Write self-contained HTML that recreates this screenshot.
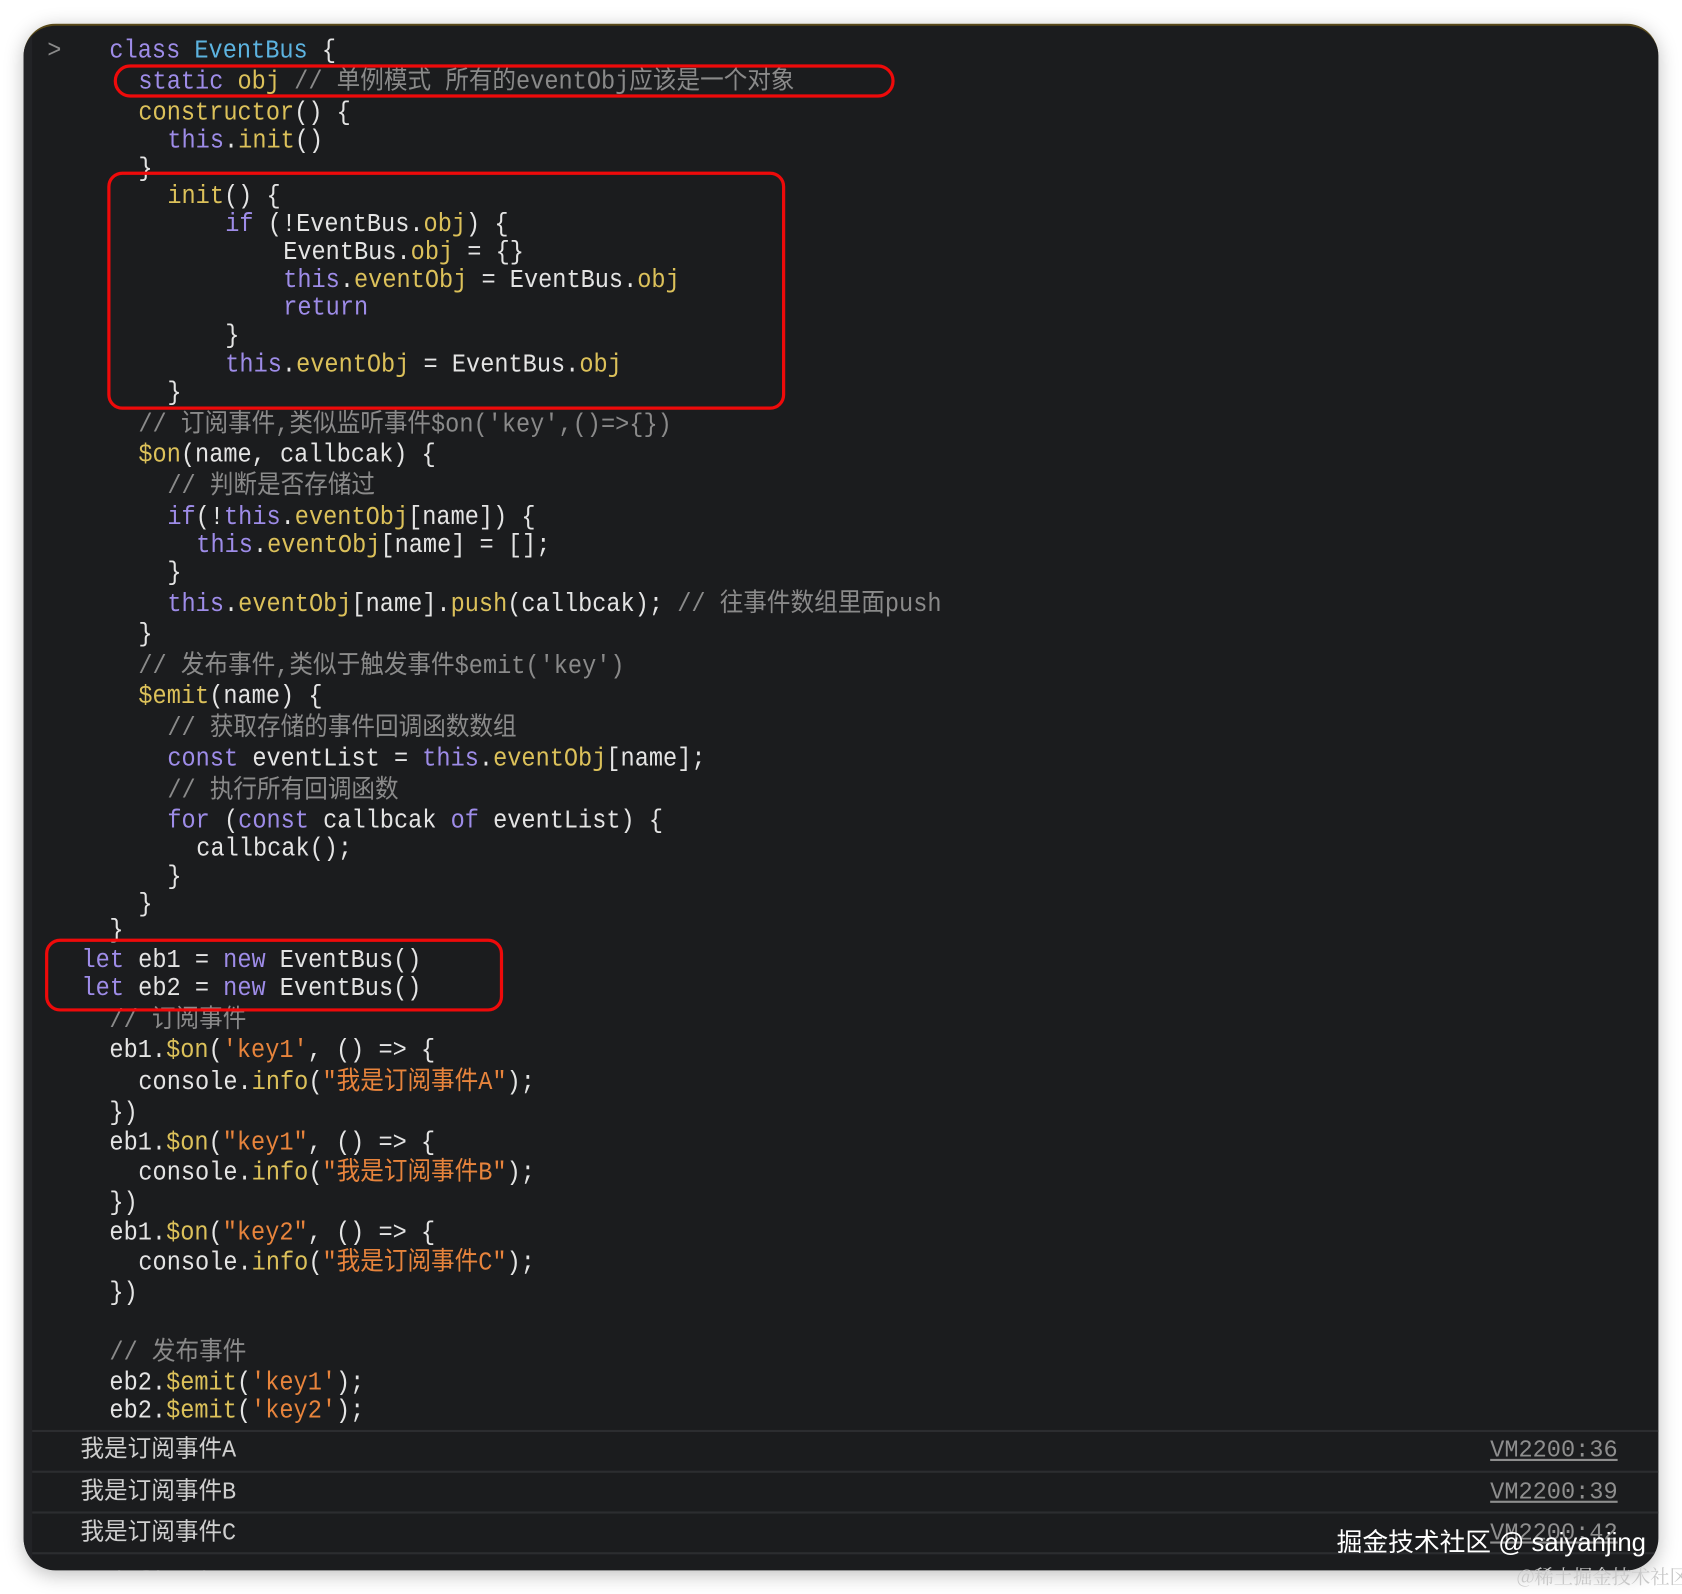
<!DOCTYPE html>
<html><head><meta charset="utf-8">
<style>
html,body{margin:0;padding:0;background:#fff;width:1682px;height:1592px;overflow:hidden}
#s{position:absolute;left:0;top:0;width:1568px;height:1484px;transform:scale(1.0727);transform-origin:0 0}
.p{position:absolute;left:22px;top:22px;width:1524px;height:1440px;background:#1b1c1e;border-radius:30px;overflow:hidden;box-shadow:0 4px 18px rgba(0,0,0,.25);border-top:2px solid #5a4a1a}
.g{position:absolute;left:0;top:0;width:8px;height:100%;background:#222326}
.t{position:absolute;left:0;top:2px;width:1568px;height:1484px}
.l{position:absolute;white-space:pre;font-family:"Liberation Mono","Noto Sans CJK SC",monospace;font-size:22px;line-height:26px;color:#e4e4e4;transform:scaleY(1.08)}
.k{color:#9e8ce8}.c{color:#5cb3e0}.y{color:#dcc15a}.m{color:#8a8a8a}.s{color:#e8843c}
.box{position:absolute;border:3px solid #ee0a0a;border-radius:14px}
.sep{position:absolute;left:8px;right:0;height:2px;background:#2c2d30}
.row{position:absolute;font-family:"Liberation Mono","Noto Sans CJK SC",monospace;font-size:22px;color:#cfcfcf;line-height:26px}
.vm{position:absolute;font-family:"Liberation Mono",monospace;font-size:22px;color:#8e8e8e;text-decoration:underline;line-height:26px}
</style></head><body><div id="s">
<div class="p"><div class="g"></div>
<div class="sep" style="top:1309px"></div>
<div class="sep" style="top:1347px"></div>
<div class="sep" style="top:1385px"></div>
<div class="sep" style="top:1423px"></div>
<div class="row" style="left:26px;top:1438px;color:#777">‹ undefined</div>
</div>
<div class="t">
<div class="l m" style="left:44px;top:33px">&gt;</div>
<div class="l" style="left:102px;top:33px"><span class="k">class</span> <span class="c">EventBus</span> {</div>
<div class="l" style="left:129px;top:62px"><span class="k">static</span> <span class="y">obj</span> <span class="m">// 单例模式 所有的eventObj应该是一个对象</span></div>
<div class="l" style="left:129px;top:91px"><span class="y">constructor</span>() {</div>
<div class="l" style="left:156px;top:117px"><span class="k">this</span>.<span class="y">init</span>()</div>
<div class="l" style="left:129px;top:143px">}</div>
<div class="l" style="left:156px;top:169px"><span class="y">init</span>() {</div>
<div class="l" style="left:210px;top:195px"><span class="k">if</span> (!EventBus.<span class="y">obj</span>) {</div>
<div class="l" style="left:264px;top:221px">EventBus.<span class="y">obj</span> = {}</div>
<div class="l" style="left:264px;top:247px"><span class="k">this</span>.<span class="y">eventObj</span> = EventBus.<span class="y">obj</span></div>
<div class="l k" style="left:264px;top:273px">return</div>
<div class="l" style="left:210px;top:299px">}</div>
<div class="l" style="left:210px;top:326px"><span class="k">this</span>.<span class="y">eventObj</span> = EventBus.<span class="y">obj</span></div>
<div class="l" style="left:156px;top:352px">}</div>
<div class="l m" style="left:129px;top:382px">// 订阅事件,类似监听事件$on('key',()=>{})</div>
<div class="l" style="left:129px;top:410px"><span class="y">$on</span>(name, callbcak) {</div>
<div class="l m" style="left:156px;top:439px">// 判断是否存储过</div>
<div class="l" style="left:156px;top:468px"><span class="k">if</span>(!<span class="k">this</span>.<span class="y">eventObj</span>[name]) {</div>
<div class="l" style="left:183px;top:494px"><span class="k">this</span>.<span class="y">eventObj</span>[name] = [];</div>
<div class="l" style="left:156px;top:520px">}</div>
<div class="l" style="left:156px;top:549px"><span class="k">this</span>.<span class="y">eventObj</span>[name].<span class="y">push</span>(callbcak); <span class="m">// 往事件数组里面push</span></div>
<div class="l" style="left:129px;top:577px">}</div>
<div class="l m" style="left:129px;top:607px">// 发布事件,类似于触发事件$emit('key')</div>
<div class="l" style="left:129px;top:635px"><span class="y">$emit</span>(name) {</div>
<div class="l m" style="left:156px;top:665px">// 获取存储的事件回调函数数组</div>
<div class="l" style="left:156px;top:693px"><span class="k">const</span> eventList = <span class="k">this</span>.<span class="y">eventObj</span>[name];</div>
<div class="l m" style="left:156px;top:723px">// 执行所有回调函数</div>
<div class="l" style="left:156px;top:751px"><span class="k">for</span> (<span class="k">const</span> callbcak <span class="k">of</span> eventList) {</div>
<div class="l" style="left:183px;top:777px">callbcak();</div>
<div class="l" style="left:156px;top:803px">}</div>
<div class="l" style="left:129px;top:829px">}</div>
<div class="l" style="left:102px;top:853px">}</div>
<div class="l" style="left:76px;top:881px"><span class="k">let</span> eb1 = <span class="k">new</span> EventBus()</div>
<div class="l" style="left:76px;top:907px"><span class="k">let</span> eb2 = <span class="k">new</span> EventBus()</div>
<div class="l m" style="left:102px;top:937px">// 订阅事件</div>
<div class="l" style="left:102px;top:965px">eb1.<span class="y">$on</span>(<span class="s">'key1'</span>, () =&gt; {</div>
<div class="l" style="left:129px;top:995px">console.<span class="y">info</span>(<span class="s">"我是订阅事件A"</span>);</div>
<div class="l" style="left:102px;top:1023px">})</div>
<div class="l" style="left:102px;top:1051px">eb1.<span class="y">$on</span>(<span class="s">"key1"</span>, () =&gt; {</div>
<div class="l" style="left:129px;top:1079px">console.<span class="y">info</span>(<span class="s">"我是订阅事件B"</span>);</div>
<div class="l" style="left:102px;top:1107px">})</div>
<div class="l" style="left:102px;top:1135px">eb1.<span class="y">$on</span>(<span class="s">"key2"</span>, () =&gt; {</div>
<div class="l" style="left:129px;top:1163px">console.<span class="y">info</span>(<span class="s">"我是订阅事件C"</span>);</div>
<div class="l" style="left:102px;top:1191px">})</div>
<div class="l m" style="left:102px;top:1247px">// 发布事件</div>
<div class="l" style="left:102px;top:1275px">eb2.<span class="y">$emit</span>(<span class="s">'key1'</span>);</div>
<div class="l" style="left:102px;top:1301px">eb2.<span class="y">$emit</span>(<span class="s">'key2'</span>);</div>
<div class="row" style="left:75px;top:1338px">我是订阅事件A</div>
<div class="row" style="left:75px;top:1377px">我是订阅事件B</div>
<div class="row" style="left:75px;top:1415px">我是订阅事件C</div>
<div class="vm" style="top:1338px;right:60px">VM2200:36</div>
<div class="vm" style="top:1377px;right:60px">VM2200:39</div>
<div class="vm" style="top:1415px;right:60px">VM2200:42</div>
</div>
<div style="position:absolute;left:1246px;top:1418px;font-family:'Liberation Sans','Noto Sans CJK SC',sans-serif;font-size:24px;color:#fff;white-space:nowrap">掘金技术社区 @ saiyanjing</div>
<div style="position:absolute;left:1414px;top:1456px;font-family:'Noto Serif CJK SC','Liberation Serif',serif;font-size:18px;color:#c8c8c8;white-space:nowrap">@稀土掘金技术社区</div>
<div class="box" style="left:106px;top:60px;width:722px;height:25px;border-radius:16px"></div>
<div class="box" style="left:100px;top:160px;width:626px;height:216px"></div>
<div class="box" style="left:42px;top:875px;width:421px;height:62px"></div>
</div></body></html>
